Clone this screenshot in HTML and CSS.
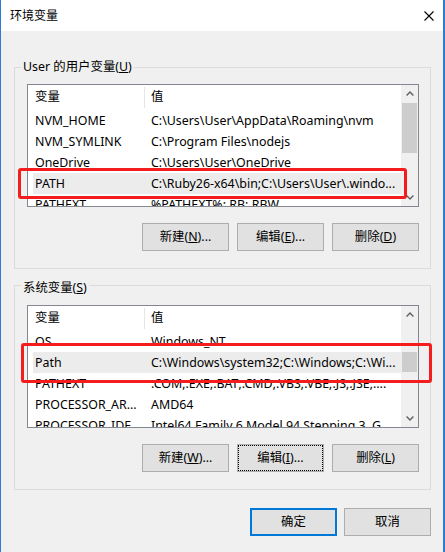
FILE: index.html
```html
<!DOCTYPE html>
<html lang="zh-CN">
<head>
<meta charset="utf-8">
<title>环境变量</title>
<link rel="stylesheet" href="styles.css">
</head>
<body>
<div class="window">
  <header class="titlebar">
    <span class="title">环境变量</span>
    <svg class="close" width="10" height="10" viewBox="0 0 10 10"><path d="M0.5 0.5 L9.5 9.5 M9.5 0.5 L0.5 9.5" stroke="#000" stroke-width="1.1" fill="none"/></svg>
  </header>

  <div class="content">
    <fieldset class="group g1">
      <legend>User 的用户变量(<u>U</u>)</legend>
      <div class="group-body">
        <div class="list">
          <div class="rows">
            <div class="row head"><span class="c1">变量</span><span class="c2">值</span></div>
            <div class="row"><span class="c1">NVM_HOME</span><span class="c2">C:\Users\User\AppData\Roaming\nvm</span></div>
            <div class="row"><span class="c1">NVM_SYMLINK</span><span class="c2">C:\Program Files\nodejs</span></div>
            <div class="row"><span class="c1">OneDrive</span><span class="c2">C:\Users\User\OneDrive</span></div>
            <div class="row sel"><span class="c1">PATH</span><span class="c2">C:\Ruby26-x64\bin;C:\Users\User\.windo...</span></div>
            <div class="row"><span class="c1">PATHEXT</span><span class="c2">%PATHEXT%;.RB;.RBW</span></div>
          </div>
          <div class="scrollbar">
            <div class="sb-btn"><svg width="8" height="5" viewBox="0 0 8 5"><path d="M0.6 4.4 L4 1 L7.4 4.4" stroke="#606060" stroke-width="1.4" fill="none"/></svg></div>
            <div class="sb-track"><div class="thumb t1"></div></div>
            <div class="sb-btn"><svg width="8" height="5" viewBox="0 0 8 5"><path d="M0.6 0.6 L4 4 L7.4 0.6" stroke="#606060" stroke-width="1.4" fill="none"/></svg></div>
          </div>
        </div>
        <div class="btns">
          <button class="btn">新建(<u>N</u>)...</button>
          <button class="btn">编辑(<u>E</u>)...</button>
          <button class="btn">删除(<u>D</u>)</button>
        </div>
      </div>
    </fieldset>

    <fieldset class="group g2">
      <legend>系统变量(<u>S</u>)</legend>
      <div class="group-body">
        <div class="list">
          <div class="rows">
            <div class="row head"><span class="c1">变量</span><span class="c2">值</span></div>
            <div class="row"><span class="c1">OS</span><span class="c2">Windows_NT</span></div>
            <div class="row sel"><span class="c1">Path</span><span class="c2">C:\Windows\system32;C:\Windows;C:\Wi...</span></div>
            <div class="row"><span class="c1">PATHEXT</span><span class="c2">.COM;.EXE;.BAT;.CMD;.VBS;.VBE;.JS;.JSE;....</span></div>
            <div class="row"><span class="c1">PROCESSOR_AR...</span><span class="c2">AMD64</span></div>
            <div class="row"><span class="c1">PROCESSOR_IDE...</span><span class="c2">Intel64 Family 6 Model 94 Stepping 3, G...</span></div>
          </div>
          <div class="scrollbar">
            <div class="sb-btn"><svg width="8" height="5" viewBox="0 0 8 5"><path d="M0.6 4.4 L4 1 L7.4 4.4" stroke="#606060" stroke-width="1.4" fill="none"/></svg></div>
            <div class="sb-track"><div class="thumb t2"></div></div>
            <div class="sb-btn"><svg width="8" height="5" viewBox="0 0 8 5"><path d="M0.6 0.6 L4 4 L7.4 0.6" stroke="#606060" stroke-width="1.4" fill="none"/></svg></div>
          </div>
        </div>
        <div class="btns">
          <button class="btn">新建(<u>W</u>)...</button>
          <button class="btn focus">编辑(<u>I</u>)...</button>
          <button class="btn">删除(<u>L</u>)</button>
        </div>
      </div>
    </fieldset>

    <div class="dialog-btns">
      <button class="btn default">确定</button>
      <button class="btn">取消</button>
    </div>
  </div>

  <div class="mark m1"></div>
  <div class="mark m2"></div>
</div>
</body>
</html>
```

FILE: styles.css
```css
* { box-sizing: border-box; }

html, body {
  margin: 0;
  padding: 0;
  background: #f0f0f0;
}

body {
  font-family: "Noto Sans", "Noto Sans CJK SC", sans-serif;
  font-size: 12.4px;
  color: #000;
}

.window {
  position: relative;
  width: 445px;
  height: 552px;
  border-left: 1px solid #2b7cd3;
  border-right: 2px solid #2b7cd3;
  background: #f0f0f0;
  overflow: hidden;
}

.titlebar {
  height: 31px;
  background: #fff;
  display: flex;
  align-items: center;
  justify-content: space-between;
  padding: 0 9px 0 9px;
}

.title {
  font-size: 12px;
  line-height: 16px;
  color: #000;
}

.close {
  display: block;
  margin-right: 0;
}

.content {
  display: flex;
  flex-direction: column;
}

.group {
  width: 417px;
  margin: 0 0 0 13px;
  border: 1px solid #dcdcdc;
  padding: 9px 11px 17px 6px;
  min-width: 0;
}

.group legend {
  padding: 0 2px;
  line-height: 16px;
  color: #000;
}

.g1 { margin-top: 28px; }
.g2 { margin-top: 5px; }
.g2 legend { padding-top: 6px; }

.group-body {
  margin-left: 6px;
  display: flex;
  flex-direction: column;
}

.list {
  height: 123px;
  border: 1px solid #828790;
  background: #fff;
  display: flex;
  overflow: hidden;
}

.rows {
  flex: 1;
  min-width: 0;
  padding-left: 5px;
  overflow: hidden;
}

.row {
  display: grid;
  grid-template-columns: 112px 1fr;
  height: 21px;
  line-height: 21px;
  white-space: nowrap;
}

.row .c1 {
  padding-left: 2px;
  overflow: hidden;
}

.row .c2 {
  padding-left: 6px;
  overflow: hidden;
}

.row.head {
  height: 25px;
  align-items: start;
}

.row.head .c1 {
  margin-top: 2px;
  height: 21px;
  border-right: 1px solid #e5e5e5;
  line-height: 20px;
}

.row.head .c2 {
  margin-top: 2px;
  line-height: 20px;
}

.row.sel {
  background: #ececec;
}

.scrollbar {
  width: 17px;
  flex: none;
  background: #f0f0f0;
  display: flex;
  flex-direction: column;
}

.sb-btn {
  height: 17px;
  display: flex;
  align-items: center;
  justify-content: center;
}

.sb-track {
  flex: 1;
  padding: 0 1px;
}

.thumb {
  background: #cdcdcd;
  width: 15px;
}

.t1 { margin-top: 1px; height: 50px; }
.t2 { margin-top: 29px; height: 20px; }

.btns {
  display: flex;
  justify-content: flex-end;
  gap: 8px;
  margin-top: 16px;
}

.btn {
  width: 87px;
  height: 28px;
  padding: 0;
  margin: 0;
  background: #e1e1e1;
  border: 1px solid #adadad;
  border-radius: 0;
  font-family: inherit;
  font-size: 12.4px;
  line-height: 16px;
  color: #000;
}

.btn.focus {
  outline: 1px dotted #000;
  outline-offset: -2px;
}

.btn.default {
  border: 2px solid #0078d7;
}

.dialog-btns {
  width: 417px;
  margin: 18px 0 0 13px;
  display: flex;
  justify-content: flex-end;
  gap: 7px;
}

.mark {
  position: absolute;
  border: 3px solid #f41c1c;
  border-radius: 3px;
}

.m1 {
  left: 17px;
  top: 168px;
  width: 389px;
  height: 31px;
}

.m2 {
  left: 20px;
  top: 343px;
  width: 411px;
  height: 40px;
}
```
